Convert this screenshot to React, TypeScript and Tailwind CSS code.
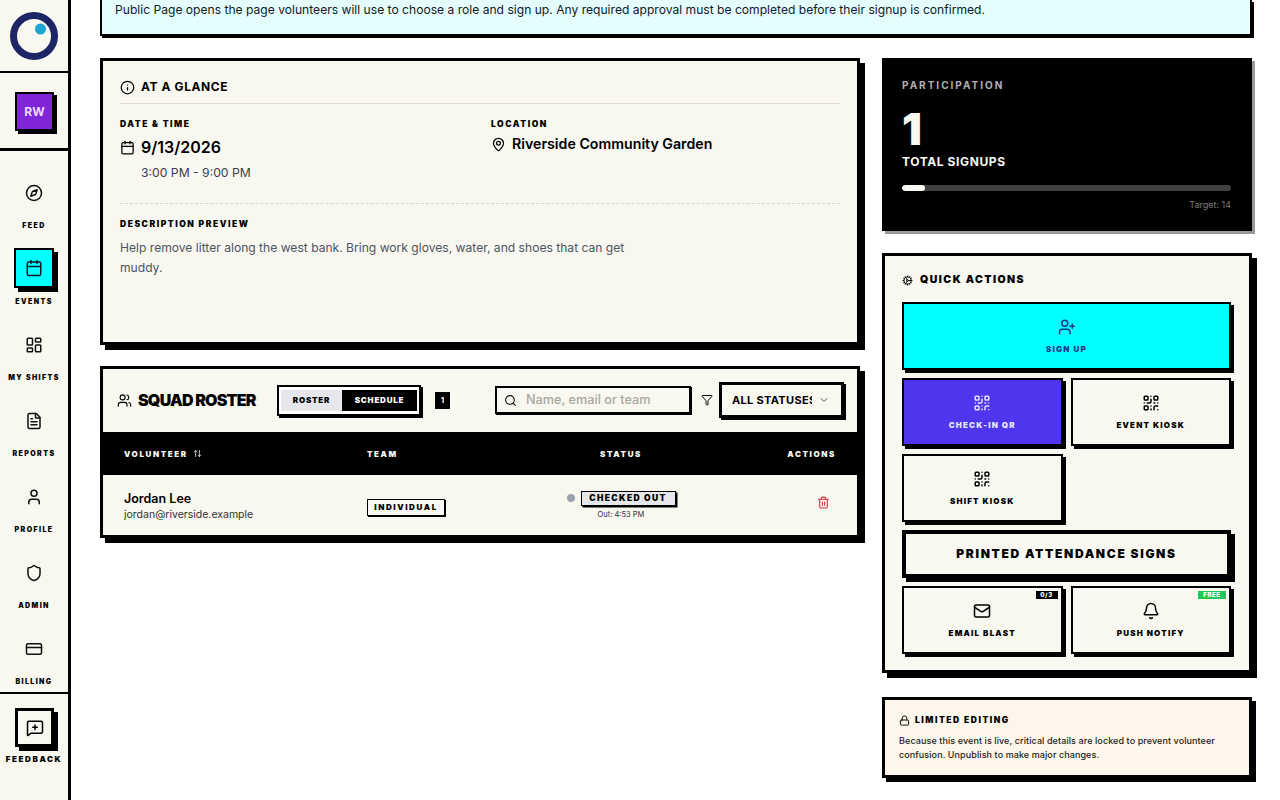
import React from "react";
import { Compass, Calendar, LayoutDashboard, FileText, User, Shield, CreditCard, MessageSquarePlus, Info, MapPin, Users, Search, Filter, ChevronDown, ArrowUpDown, Trash2, Cog, UserPlus, QrCode, Mail, Bell, Lock } from "lucide-react";

const nav = [
  { label: "FEED", Icon: Compass },
  { label: "EVENTS", Icon: Calendar, active: true },
  { label: "MY SHIFTS", Icon: LayoutDashboard },
  { label: "REPORTS", Icon: FileText },
  { label: "PROFILE", Icon: User },
  { label: "ADMIN", Icon: Shield },
  { label: "BILLING", Icon: CreditCard },
];

function Action({ label, Icon, className = "", tag, tagClass = "" }: any) {
  return (
    <div className={`relative h-[68px] border-2 border-black shadow-[3px_3px_0_#000] flex flex-col items-center justify-center ${className}`}>
      {tag && <span className={`absolute top-[3px] right-[3px] h-[8px] flex items-center justify-center text-[6px] leading-none font-black tracking-[0.1em] ${tagClass}`}>{tag}</span>}
      <Icon size={18} strokeWidth={2} />
      <span className="mt-[8px] text-[8px] leading-[10px] font-black tracking-[0.15em]">{label}</span>
    </div>
  );
}

export default function App() {
  return (
    <div className="h-[800px] w-[1280px] overflow-hidden bg-white flex text-black font-['Inter',sans-serif]">
      <aside className="w-[71px] shrink-0 h-full bg-[#f8f7f0] border-r-[3px] border-black flex flex-col">
        <div className="h-[73px] border-b-[2px] border-black flex items-center justify-center">
          <svg width="52" height="52" viewBox="0 0 52 52">
            <circle cx="26" cy="26" r="20.5" fill="none" stroke="#1d2567" strokeWidth="7" />
            <circle cx="32.5" cy="19" r="5.5" fill="#1ea7d0" />
          </svg>
        </div>
        <div className="h-[78px] border-b-[3px] border-black flex items-start justify-center pt-[19px] pl-[1px]">
          <div className="w-[39px] h-[39px] bg-[#8025d8] border-[2px] border-black shadow-[3px_3px_0_#000] flex items-center justify-center text-[#ecdcff] text-[12px] font-bold">RW</div>
        </div>
        <nav className="h-[543px] border-b-[2px] border-black pt-[22px] flex flex-col gap-[19px]">
          {nav.map(({ label, Icon, active }) => (
            <div key={label} className="flex flex-col items-center">
              <div className={`w-[40px] h-[40px] flex items-center justify-center ${active ? "bg-[#00ffff] border-[2px] border-black shadow-[4px_4px_0_#000] -mt-[1px] mb-[1px]" : ""}`}>
                <Icon size={18} strokeWidth={2} className={active ? "text-[#0f172a]" : "text-[#111]"} />
              </div>
              <span className="mt-[8px] -mb-[1px] h-[10px] text-[7px] leading-[10px] font-black tracking-[0.2em] whitespace-nowrap">{label}</span>
            </div>
          ))}
        </nav>
        <div className="flex flex-col items-center pt-[14px]">
          <div className="ml-[1px] w-[39px] h-[39px] border-[3px] border-black shadow-[4px_4px_0_#000] flex items-center justify-center">
            <MessageSquarePlus size={18} strokeWidth={2} />
          </div>
          <span className="mt-[7px] text-[8px] leading-[10px] font-black tracking-[0.2em]">FEEDBACK</span>
        </div>
      </aside>

      <main className="flex-1 min-w-0 pl-[29px] pr-[28px]">
        <div className="h-[36px] border-x-2 border-b-2 border-black bg-[#e6fdfe] shadow-[2px_2px_0_#000] pl-[13px] pt-[2px] text-[12.1px] leading-[16px] text-[#111827]">
          Public Page opens the page volunteers will use to choose a role and sign up. Any required approval must be completed before their signup is confirmed.
        </div>

        <div className="mt-[22px] flex gap-[22px] items-start">
          <div className="w-[760px] shrink-0 flex flex-col gap-[21px]">
            <section className="h-[287px] border-[3px] border-black bg-[#f8f7f0] shadow-[5px_5px_0_#000] px-[17px] pt-[14px]">
              <div className="flex items-center gap-[6px] h-[24px] pb-[4px] box-content border-b border-[#dddbd3]">
                <Info size={15} strokeWidth={2} />
                <span className="text-[12px] font-bold tracking-[0.05em]">AT A GLANCE</span>
              </div>
              <div className="grid grid-cols-2 gap-x-[22px] mt-[15px] h-[85px] border-b border-dashed border-[#d4d4d0]">
                <div>
                  <div className="text-[8.5px] leading-[10px] font-black tracking-[0.18em]">DATE &amp; TIME</div>
                  <div className="flex items-center gap-[6px] mt-[6px]">
                    <Calendar size={15} strokeWidth={2} />
                    <span className="text-[16px] leading-[24px] font-semibold">9/13/2026</span>
                  </div>
                  <div className="pl-[21px] mt-[5px] text-[12.2px] leading-[18px] text-[#374151]">3:00 PM - 9:00 PM</div>
                </div>
                <div>
                  <div className="text-[8.5px] leading-[10px] font-black tracking-[0.18em]">LOCATION</div>
                  <div className="flex items-center gap-[6px] mt-[3px]">
                    <MapPin size={15} strokeWidth={2} />
                    <span className="text-[14.2px] leading-[24px] font-semibold">Riverside Community Garden</span>
                  </div>
                </div>
              </div>
              <div className="mt-[15px] text-[8.5px] leading-[10px] font-black tracking-[0.18em]">DESCRIPTION PREVIEW</div>
              <p className="mt-[9px] w-[520px] text-[12.1px] leading-[20px] text-[#4b5563]">Help remove litter along the west bank. Bring work gloves, water, and shoes that can get muddy.</p>
            </section>

            <section className="h-[172px] border-[3px] border-black bg-[#f8f7f0] shadow-[5px_5px_0_#000] flex flex-col">
              <div className="h-[63px] flex items-center pl-[14px] pb-[1px]">
                <Users size={15} strokeWidth={1.75} />
                <span className="ml-[6px] w-[118px] whitespace-nowrap text-[16px] font-black tracking-[-0.05em]">SQUAD ROSTER</span>
                <div className="ml-[21px] h-[31px] w-[144px] border-[2px] border-black bg-white shadow-[2px_2px_0_#000] flex items-center p-[2px]">
                  <span className="w-[61px] h-[21px] bg-[#e5e7eb] flex items-center justify-center text-[8px] font-black tracking-[0.1em]">ROSTER</span>
                  <span className="flex-1 h-[21px] bg-black text-white flex items-center justify-center text-[8px] font-black tracking-[0.1em]">SCHEDULE</span>
                </div>
                <span className="ml-[14px] w-[15px] h-[17px] bg-black text-white text-[8px] font-bold flex items-center justify-center">1</span>
                <div className="ml-[45px] w-[196px] h-[28px] border-[2px] border-black shadow-[1px_1px_0_#000] flex items-center pl-[7px]">
                  <Search size={13} strokeWidth={2} />
                  <span className="ml-[9px] text-[12.7px] font-medium text-[#a8a8a3] whitespace-nowrap">Name, email or team</span>
                </div>
                <Filter size={12} strokeWidth={2} className="ml-[10px]" />
                <div className="ml-[6px] w-[125px] h-[36px] border-[3px] border-black shadow-[2px_2px_0_#000] flex items-center pl-[10px]">
                  <span className="w-[80px] overflow-hidden whitespace-nowrap text-[11px] font-bold tracking-[0.03em]">ALL STATUSES</span>
                  <ChevronDown size={12} strokeWidth={2} className="ml-[6px] text-[#555]" />
                </div>
              </div>
              <div className="h-[43px] bg-black text-[#f8f7f0] grid grid-cols-[243px_166px_218px_1fr] items-center text-[8px] font-black tracking-[0.2em]">
                <span className="pl-[21px] flex items-center gap-[5px]">VOLUNTEER <ArrowUpDown size={9} strokeWidth={2} /></span>
                <span className="pl-[21px]">TEAM</span>
                <span className="text-center">STATUS</span>
                <span className="text-right pr-[21px]">ACTIONS</span>
              </div>
              <div className="flex-1 grid grid-cols-[243px_166px_218px_1fr] items-center">
                <div className="pl-[21px] pt-[3px]">
                  <div className="text-[12.5px] leading-[16px] font-semibold">Jordan Lee</div>
                  <div className="text-[10.5px] leading-[14px] mt-[1px] text-[#333]">jordan@riverside.example</div>
                </div>
                <div className="pl-[21px] pt-[4px]">
                  <span className="flex h-[17px] w-[78px] items-center justify-center border-[1.5px] border-black shadow-[1px_1px_0_#000] text-[8px] font-black tracking-[0.2em]">INDIVIDUAL</span>
                </div>
                <div className="flex flex-col items-center">
                  <div className="flex items-center gap-[6px]">
                    <span className="w-[8px] h-[8px] rounded-full bg-[#9ca3af]" />
                    <span className="h-[15px] w-[95px] border-[1.5px] border-black bg-[#e5e7eb] shadow-[1.5px_1.5px_0_#000] flex items-center justify-center text-[8.5px] font-black tracking-[0.16em]">CHECKED OUT</span>
                  </div>
                  <span className="mt-[4px] text-[7.5px] leading-[10px] text-[#333]">Out: 4:53 PM</span>
                </div>
                <div className="flex justify-end pr-[27px] pb-[5px]"><Trash2 size={13} strokeWidth={2} className="text-[#dc2f3f]" /></div>
              </div>
            </section>
          </div>

          <div className="w-[370px] shrink-0 flex flex-col">
            <section className="h-[173px] bg-black shadow-[3px_3px_0_#999] pl-[20px] pr-[21px] pt-[21px] text-[#f8f7f0]">
              <div className="text-[10px] leading-[12px] font-bold tracking-[0.2em] text-[#b0b0b0]">PARTICIPATION</div>
              <div className="mt-[13px] text-[44px] leading-[50px] font-black">1</div>
              <div className="text-[12px] leading-[16px] font-bold tracking-[0.05em]">TOTAL SIGNUPS</div>
              <div className="mt-[15px] h-[6px] rounded-full bg-[#3f3f3f] overflow-hidden"><div className="h-full w-[7%] bg-[#f8f7f0] rounded-full" /></div>
              <div className="mt-[8px] text-right text-[9px] leading-[12px] text-[#7a7a7a]">Target: 14</div>
            </section>

            <section className="mt-[22px] h-[420px] border-[3px] border-black bg-[#f8f7f0] shadow-[5px_5px_0_#000] pl-[17px] pr-[18px] pt-[15px]">
              <div className="h-[18px] flex items-center gap-[7px]">
                <Cog size={11} strokeWidth={2} />
                <span className="text-[10.5px] font-black tracking-[0.14em]">QUICK ACTIONS</span>
              </div>
              <div className="mt-[13px] grid grid-cols-2 gap-x-[8px] gap-y-[8px]">
                <Action label="SIGN UP" Icon={UserPlus} className="col-span-2 bg-[#00ffff] text-[#1e3a8a]" />
                <Action label="CHECK-IN QR" Icon={QrCode} className="bg-[#4f35ee] text-[#e0e7ff]" />
                <Action label="EVENT KIOSK" Icon={QrCode} />
                <Action label="SHIFT KIOSK" Icon={QrCode} />
                <div />
                <div className="col-span-2 h-[48px] border-[4px] border-black shadow-[4px_4px_0_#000] flex items-center justify-center text-[12px] font-black tracking-[0.14em]">PRINTED ATTENDANCE SIGNS</div>
                <Action label="EMAIL BLAST" Icon={Mail} tag="0/3" tagClass="w-[22px] bg-black text-white" />
                <Action label="PUSH NOTIFY" Icon={Bell} tag="FREE" tagClass="w-[28px] bg-[#22c55e] text-white" />
              </div>
            </section>

            <section className="mt-[24px] h-[81px] border-[3px] border-black bg-[#fdf6ea] shadow-[4px_4px_0_#000] pl-[14px] pt-[13px]">
              <div className="flex items-center gap-[5px] h-[14px]">
                <Lock size={11} strokeWidth={2} />
                <span className="text-[8.5px] font-black tracking-[0.18em]">LIMITED EDITING</span>
              </div>
              <p className="mt-[7px] w-[335px] text-[9px] leading-[14px] font-medium tracking-[0.01em] text-[#222]">Because this event is live, critical details are locked to prevent volunteer confusion. Unpublish to make major changes.</p>
            </section>
          </div>
        </div>
      </main>
    </div>
  );
}
